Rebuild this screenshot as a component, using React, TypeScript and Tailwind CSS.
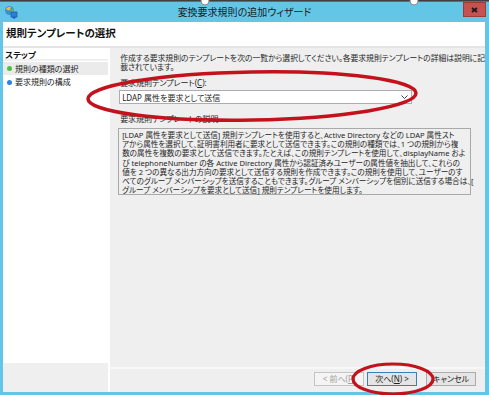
import type { ReactNode } from "react";

const FONT = "font-['Noto_Sans','Noto_Sans_CJK_JP',sans-serif] [font-feature-settings:'palt']";

const DESC = [
  "[LDAP 属性を要求として送信] 規則テンプレートを使用すると、Active Directory などの LDAP 属性スト",
  "アから属性を選択して、証明書利用者に要求として送信できます。この規則の種類では、1 つの規則から複",
  "数の属性を複数の要求として送信できます。たとえば、この規則テンプレートを使用して、displayName およ",
  "び telephoneNumber の各 Active Directory 属性から認証済みユーザーの属性値を抽出して、これらの",
  "値を 2 つの異なる出力方向の要求として送信する規則を作成できます。この規則を使用して、ユーザーのす",
  "べてのグループ メンバーシップを送信することもできます。グループ メンバーシップを個別に送信する場合は、[",
  "グループ メンバーシップを要求として送信] 規則テンプレートを使用します。",
];

function AppIcon() {
  return (
    <svg width="14" height="14" viewBox="0 0 14 14">
      <circle cx="5.5" cy="5.5" r="4.5" fill="#3a8fd8" />
      <path d="M2 4 Q4 1 7 2 L6 5 Q4 6 2 4 Z" fill="#f2c21b" />
      <path d="M6 5 L9 4 Q10 7 8 9 Z" fill="#6cbf3a" />
      <rect x="7" y="7" width="6" height="5" fill="#2f7fd0" stroke="#1c5ea8" strokeWidth="0.8" />
      <rect x="8.5" y="12" width="3" height="1.5" fill="#1c5ea8" />
    </svg>
  );
}

function Btn({ children, variant }: { children: ReactNode; variant?: "disabled" | "default" }) {
  const cls =
    variant === "disabled"
      ? "border-[#c4c4c4] text-[#a0a0a0] bg-[#f4f4f4]"
      : variant === "default"
      ? "border-[#3c7fb1] text-[#222] bg-[#e5e5e5]"
      : "border-[#acacac] text-[#222] bg-[#e5e5e5]";
  return (
    <div className={`w-[50px] h-[14px] border flex items-center justify-center text-[8px] leading-none ${cls}`}>
      {children}
    </div>
  );
}

export default function App() {
  return (
    <div className={`relative w-[489px] h-[395px] overflow-hidden bg-[#63c6e6] flex flex-col ${FONT}`}>
      {/* title bar */}
      <div className="h-[22px] shrink-0 grid grid-cols-[60px_1fr_60px] items-center">
        <div className="pl-[4px] pt-[2px]">
          <AppIcon />
        </div>
        <div className="text-center text-[10px] text-[#1a1a1a] pt-[3px]">変換要求規則の追加ウィザード</div>
        <div className="flex justify-end self-start pt-[2px] pr-[3px]">
          <div className="w-[23px] h-[15px] bg-[#c75050] border border-[#9e3a3a] flex items-center justify-center">
            <svg width="7" height="6" viewBox="0 0 7 6">
              <path d="M1 1 L6 5 M6 1 L1 5" stroke="#1a1a1a" strokeWidth="1.8" />
            </svg>
          </div>
        </div>
      </div>

      {/* client */}
      <div className="ml-[3px] mr-[4px] h-[370px] flex flex-col bg-white">
        <div className="h-[24px] shrink-0 flex items-center pl-[3px] text-[10.5px] font-bold text-[#111]">
          規則テンプレートの選択
        </div>
        <div className="h-[2px] bg-[#e4e4e4]" />

        <div className="flex-1 flex min-h-0">
          {/* steps */}
          <div className="w-[111px] flex flex-col">
            <div className="flex-1 bg-white flex flex-col">
              <div className="h-[12px] mt-[1px] pl-[2px] text-[8.5px] font-bold leading-[12px] text-[#111] border-b-2 border-[#f0f0f0]">
                ステップ
              </div>
              <div className="mt-[1px] h-[13px] bg-[#ebebeb] flex items-center gap-[3px] pl-[4px] text-[8px] text-[#222]">
                <span className="w-[5px] h-[5px] rounded-full bg-[#4cc23a]" />
                規則の種類の選択
              </div>
              <div className="h-[14px] flex items-center gap-[3px] pl-[4px] text-[8px] text-[#222]">
                <span className="w-[5px] h-[5px] rounded-full bg-[#2f84e0]" />
                要求規則の構成
              </div>
            </div>
            <div className="h-[29px] bg-[#efefef]" />
          </div>
          <div className="w-[2px] bg-white" />

          {/* main */}
          <div className="flex-1 flex flex-col bg-[#efefef]">
            <div className="flex-1 flex flex-col pl-[8px] pt-[6px] text-[8px] leading-[9px] text-[#1e1e1e]">
              <div className="pl-[2px] text-[7.8px]">
                <div className="whitespace-nowrap">
                  作成する要求規則のテンプレートを次の一覧から選択してください。各要求規則テンプレートの詳細は説明に記
                </div>
                <div>載されています。</div>
              </div>
              <div className="pl-[2px] mt-[6px]">
                要求規則テンプレート(<span className="underline">C</span>):
              </div>
              <div className="mt-[3px] ml-[1px] w-[293px] h-[14px] bg-white border border-[#abadb3] flex items-center justify-between pl-[2px] pr-[3px]">
                <span>LDAP 属性を要求として送信</span>
                <svg width="7" height="4" viewBox="0 0 7 4">
                  <path d="M0.5 0.5 L3.5 3.5 L6.5 0.5" stroke="#444" strokeWidth="1" fill="none" />
                </svg>
              </div>
              <div className="pl-[2px] mt-[10px]">要求規則テンプレートの説明</div>
              <div className="mt-[5px] w-[353px] h-[67px] border border-[#a9a9a9] pl-[3px] pt-[2px] leading-[9.2px] text-[7.6px]">
                {DESC.map((l, i) => (
                  <div key={i} className="whitespace-nowrap">
                    {l}
                  </div>
                ))}
              </div>
            </div>
            <div className="h-[2px] bg-[#f7f7f7]" />
            <div className="h-[23px] flex items-start pt-[3px] justify-end pr-[9px]">
              <Btn variant="disabled">&lt; 前へ(<span className="underline">P</span>)</Btn>
              <div className="w-[3px]" />
              <Btn variant="default">次へ(<span className="underline">N</span>) &gt;</Btn>
              <div className="w-[9px]" />
              <Btn>キャンセル</Btn>
            </div>
          </div>
        </div>
      </div>

      {/* selection frame + annotations */}
      <svg className="absolute inset-0 pointer-events-none" width="489" height="395" viewBox="0 0 489 395">
        <rect x="0" y="0" width="489" height="1.6" fill="#3f3f3f" />
        <circle cx="205" cy="1" r="4" fill="#fff" stroke="#8a8a8a" strokeWidth="1" />
        <circle cx="414" cy="1" r="4" fill="#fff" stroke="#8a8a8a" strokeWidth="1" />
        <ellipse cx="252" cy="96" rx="164" ry="24" fill="none" stroke="#c4121c" strokeWidth="3.5" transform="rotate(-1 252 96)" />
        <ellipse cx="393" cy="379" rx="40" ry="15" fill="none" stroke="#c4121c" strokeWidth="3.2" />
      </svg>
    </div>
  );
}
